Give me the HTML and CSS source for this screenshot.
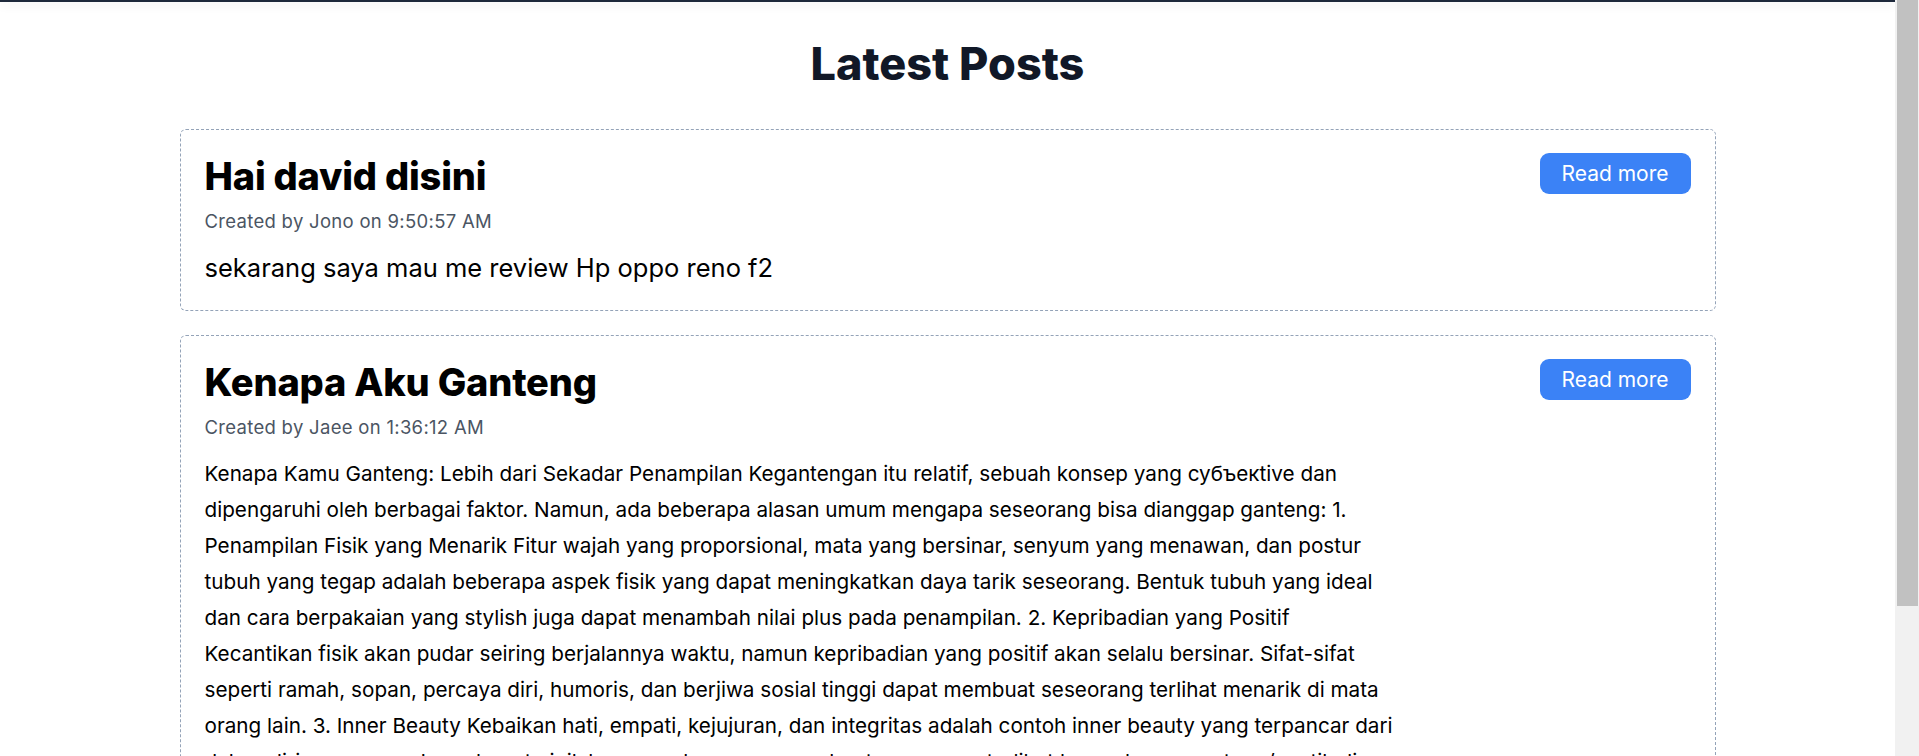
FILE: index.html
```html
<!DOCTYPE html>
<html lang="id">
<head>
<meta charset="utf-8">
<title>Latest Posts</title>
<link rel="stylesheet" href="styles.css">
</head>
<body>
<div class="topbar"></div>
<main class="page">
  <h1 class="page-title">Latest Posts</h1>
  <div class="post-list">
    <article class="post">
      <div class="post-main">
        <h2 class="post-title">Hai david disini</h2>
        <p class="post-meta">Created by Jono on 9:50:57 AM</p>
        <p class="post-body">sekarang saya mau me review Hp oppo reno f2</p>
      </div>
      <a class="btn" href="#">Read more</a>
    </article>
    <article class="post">
      <div class="post-main">
        <h2 class="post-title">Kenapa Aku Ganteng</h2>
        <p class="post-meta">Created by Jaee on 1:36:12 AM</p>
        <p class="post-body post-body-long">Kenapa Kamu Ganteng: Lebih dari Sekadar Penampilan Kegantengan itu relatif, sebuah konsep yang субъекtive dan dipengaruhi oleh berbagai faktor. Namun, ada beberapa alasan umum mengapa seseorang bisa dianggap ganteng: 1. Penampilan Fisik yang Menarik Fitur wajah yang proporsional, mata yang bersinar, senyum yang menawan, dan postur tubuh yang tegap adalah beberapa aspek fisik yang dapat meningkatkan daya tarik seseorang. Bentuk tubuh yang ideal dan cara berpakaian yang stylish juga dapat menambah nilai plus pada penampilan. 2. Kepribadian yang Positif Kecantikan fisik akan pudar seiring berjalannya waktu, namun kepribadian yang positif akan selalu bersinar. Sifat-sifat seperti ramah, sopan, percaya diri, humoris, dan berjiwa sosial tinggi dapat membuat seseorang terlihat menarik di mata orang lain. 3. Inner Beauty Kebaikan hati, empati, kejujuran, dan integritas adalah contoh inner beauty yang terpancar dari dalam diri seseorang. Inner beauty inilah yang sebenarnya membuat seseorang terlihat benar-benar ganteng/cantik di mata orang lain. 4. Kecerdasan Kecerdasan dan wawasan yang luas juga menjadi daya tarik tersendiri. Seseorang yang cerdas biasanya mampu berkomunikasi dengan baik dan memberikan pandangan yang menarik dalam setiap percakapan. Kesimpulan Pada akhirnya, ganteng bukan hanya soal wajah, tetapi kombinasi dari penampilan, kepribadian, dan inner beauty.</p>
      </div>
      <a class="btn" href="#">Read more</a>
    </article>
  </div>
</main>
<div class="scrollbar" aria-hidden="true"><div class="scrollbar-thumb"></div></div>
</body>
</html>
```

FILE: styles.css
```css
html, body {
  margin: 0;
  padding: 0;
  background: #ffffff;
}

html {
  scrollbar-width: none;
}
::-webkit-scrollbar {
  display: none;
}

body {
  padding-right: 24px;
  font-family: Inter, "Noto Sans", sans-serif;
  color: #000000;
}

.topbar {
  height: 2px;
  background: #1e293b;
  box-shadow: 0 3px 10px rgba(0, 0, 0, 0.12);
}

.scrollbar {
  position: fixed;
  top: 0;
  right: 0;
  bottom: 0;
  width: 24px;
  background: #f1f1f1;
}

.scrollbar-thumb {
  margin: 0 1px 0 2px;
  height: 606px;
  background: #c1c1c1;
}

.page {
  max-width: 1536px;
  margin: 0 auto;
  padding: 37px 0 32px;
}

.page-title {
  margin: 0 0 40px;
  text-align: center;
  font-size: 45px;
  line-height: 50px;
  font-weight: 800;
  color: #111827;
}

.post-list {
  display: flex;
  flex-direction: column;
  gap: 24px;
}

.post {
  display: flex;
  justify-content: space-between;
  align-items: flex-start;
  border: 1px dashed #94a3b8;
  border-radius: 6px;
  padding: 24px;
}

.post-main {
  width: 80%;
}

.post-title {
  margin: 0;
  font-size: 38px;
  line-height: 45px;
  font-weight: 800;
  color: #000000;
  letter-spacing: -0.2px;
}

.post-meta {
  margin: 10px 0 0;
  font-size: 18.5px;
  line-height: 25px;
  letter-spacing: 0.3px;
  color: #4b5563;
}

.post-body {
  margin: 16px 0 0;
  font-size: 25.5px;
  line-height: 36px;
  color: #000000;
}

.post-body-long {
  font-size: 20.7px;
}

.btn {
  flex: none;
  display: inline-block;
  margin-top: -1px;
  padding: 0 22px;
  height: 41px;
  line-height: 41px;
  border-radius: 9px;
  background: #3b82f6;
  color: #ffffff;
  font-size: 21px;
  text-decoration: none;
}
```
